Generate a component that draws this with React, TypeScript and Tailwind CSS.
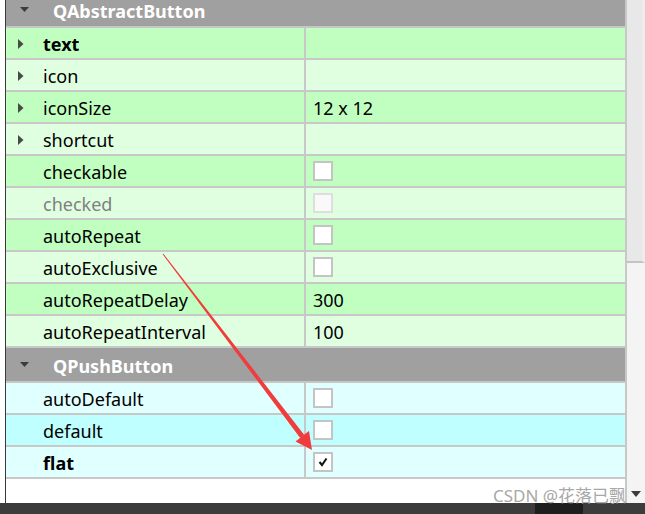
import React from "react";

type Row = {
  name: string;
  value?: string;
  check?: "off" | "on" | "disabled";
  bold?: boolean;
  expand?: boolean;
  muted?: boolean;
};

const abstractRows: Row[] = [
  { name: "text", bold: true, expand: true },
  { name: "icon", expand: true },
  { name: "iconSize", value: "12 x 12", expand: true },
  { name: "shortcut", expand: true },
  { name: "checkable", check: "off" },
  { name: "checked", check: "disabled", muted: true },
  { name: "autoRepeat", check: "off" },
  { name: "autoExclusive", check: "off" },
  { name: "autoRepeatDelay", value: "300" },
  { name: "autoRepeatInterval", value: "100" },
];

const pushRows: Row[] = [
  { name: "autoDefault", check: "off" },
  { name: "default", check: "off" },
  { name: "flat", check: "on", bold: true },
];

const Checkbox = ({ state }: { state: "off" | "on" | "disabled" }) => {
  if (state === "disabled") {
    return <div className="w-[20px] h-[20px] border-2 border-[#dedede] bg-[#f9f9f9]" />;
  }
  return (
    <div className="w-[20px] h-[20px] border-2 border-[#c4c4c4] bg-white flex items-center justify-center">
      {state === "on" && (
        <svg width="10" height="10" viewBox="0 0 10 10">
          <path d="M1.5 5 L4 8 L8.5 1.5" stroke="#111" strokeWidth="2" fill="none" />
        </svg>
      )}
    </div>
  );
};

const SectionHeader = ({ title }: { title: string }) => (
  <div className="h-[35px] bg-[#a0a0a0] border-b-2 border-[#c6c6c6] flex items-center pt-[3px]">
    <svg width="10" height="6" viewBox="0 0 10 6" className="ml-[14px] mr-[23px] -mt-[2px]">
      <path d="M0 0 H9 L4.5 5 Z" fill="#3c3c3c" />
    </svg>
    <span className="text-white font-bold text-[18px] leading-[24px]">{title}</span>
  </div>
);

const PropRow = ({ row, bg }: { row: Row; bg: string }) => (
  <div className={`h-[32px] border-b-2 border-[#c8c8c8] flex ${bg}`}>
    <div className="w-[300px] flex items-center border-r-2 border-[#c8c8c8] pt-[2px]">
      <div className="w-[37px] flex pl-[12px]">
        {row.expand && (
          <svg width="6" height="10" viewBox="0 0 6 10">
            <path d="M0 0 L5.5 5 L0 10 Z" fill="#4a4a4a" />
          </svg>
        )}
      </div>
      <span
        className={`text-[18px] leading-[24px] ${row.bold ? "font-bold" : ""} ${
          row.muted ? "text-[#808080]" : "text-black"
        }`}
      >
        {row.name}
      </span>
    </div>
    <div className="flex-1 flex items-center pl-[7px]">
      {row.check && <Checkbox state={row.check} />}
      {row.value && (
        <span className="text-[18px] leading-[24px] text-black pt-[2px]">{row.value}</span>
      )}
    </div>
  </div>
);

const App: React.FC = () => {
  return (
    <div
      className="relative w-[645px] h-[514px] overflow-hidden bg-white flex flex-col"
      style={{ fontFamily: '"Noto Sans", "Noto Sans CJK SC", sans-serif' }}
    >
      <div className="flex h-[503px]">
        {/* left edge */}
        <div className="w-[5px] bg-white" />
        <div className="w-[1px] bg-[#3a3a3a]" />

        {/* property table */}
        <div className="w-[619px] overflow-hidden">
          <div className="-mt-[7px]">
            <SectionHeader title="QAbstractButton" />
            {abstractRows.map((r, i) => (
              <PropRow key={r.name} row={r} bg={i % 2 === 0 ? "bg-[#c0ffc0]" : "bg-[#e0ffe0]"} />
            ))}
            <SectionHeader title="QPushButton" />
            {pushRows.map((r, i) => (
              <PropRow key={r.name} row={r} bg={i % 2 === 0 ? "bg-[#e0ffff]" : "bg-[#c0ffff]"} />
            ))}
          </div>
        </div>

        {/* scrollbar */}
        <div className="w-[20px] border-l-2 border-[#c8c8c8] bg-[#f4f4f4] flex flex-col">
          <div className="h-[263px] bg-[#e8e8e8] border-b-2 border-[#c4c4c4] border-r-[3px] border-r-[#ececec]" />
          <div className="flex-1" />
          <div className="h-[18px] flex items-center justify-center">
            <svg width="10" height="6" viewBox="0 0 10 6">
              <path d="M0 0 H10 L5 6 Z" fill="#3c3c3c" />
            </svg>
          </div>
        </div>
      </div>

      {/* bottom bar */}
      <div className="flex-1 bg-[#3c3c3c] flex">
        <div className="ml-[535px] w-[48px] bg-[#1e1e1e]" />
      </div>

      {/* red annotation arrow */}
      <svg className="absolute left-0 top-0 pointer-events-none" width="645" height="514">
        <polygon points="162.6,254.3 163.4,253.7 304.3,435 300.2,437.9" fill="#f03c3c" />
        <polygon points="312,450 295.5,441.5 309,431" fill="#f03c3c" />
      </svg>

      {/* watermark */}
      <div className="absolute left-[493px] top-[485px] text-[17px] text-[#a8a8a8] leading-[22px] whitespace-nowrap">
        CSDN @花落已飘
      </div>
    </div>
  );
};

export default App;
